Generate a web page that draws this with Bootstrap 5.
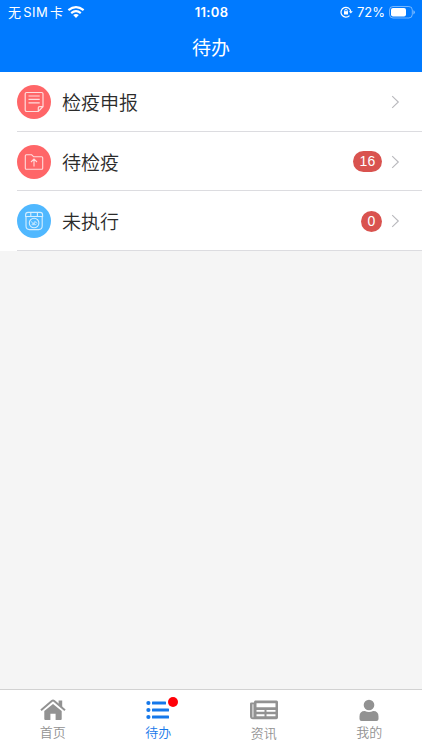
<!DOCTYPE html>
<html lang="zh-CN">
<head>
<meta charset="utf-8">
<meta name="viewport" content="width=device-width, initial-scale=1">
<title>待办</title>
<link href="https://cdn.jsdelivr.net/npm/bootstrap@5.3.0/dist/css/bootstrap.min.css" rel="stylesheet">
<style>
body{font-family:Inter,"Noto Sans CJK SC",sans-serif;background:#f5f5f5;color:#2b2b2b}
svg{display:block;flex:none}
.app-header{height:72px;background:#007aff}
.status-bar{height:24px;display:grid;grid-template-columns:1fr auto 1fr;padding:0 7px 0 8px;font-size:13px;line-height:24px}
.status-bar .clock{font-weight:600;font-size:13px;letter-spacing:.3px}
.carrier{letter-spacing:.4px;word-spacing:-2.2px}
.page-title{font-size:19px;font-weight:400;line-height:48px;height:48px;padding-top:1px}
.task{padding-left:17px;height:59.5px}
.task-line{border-bottom:1px solid #dcdce0;padding:2px 22px 0 0}
.task-icon{width:34px;height:34px;margin-right:11px}
.task-name{font-size:19px;line-height:28px;padding-top:4px;font-weight:350}
.count{background:#d9534f;font:400 14px/20px "Liberation Sans",sans-serif;height:21px;min-width:21px;padding:0 6.5px;margin-right:9px;letter-spacing:.2px}
.tabs{height:61px;border-top:1px solid #d2d2d2;background:#fff}
.tab{color:#929292;font-size:13px;line-height:18px;padding-top:8px;text-decoration:none;font-weight:350}
.tab.current{color:#1678ea}
.tab svg{margin-bottom:1px}
.tab .icon-news{margin-bottom:2px}
.dot{position:absolute;width:10px;height:10px;left:22px;top:-1px;background:#ff0008}
</style>
<script src="https://cdn.jsdelivr.net/npm/bootstrap@5.3.0/dist/js/bootstrap.bundle.min.js"></script>
</head>
<body class="vh-100 d-flex flex-column overflow-hidden">
<header class="app-header text-white">
  <div class="status-bar">
    <div class="d-flex align-items-center"><span class="carrier">无 SIM 卡</span>
      <svg class="ms-1" width="18" height="14" viewBox="0 0 18 14" fill="none" stroke="#fff" stroke-width="2.2"><path d="M1.4 5.2q7.6-6.3 15.2 0M4.2 8.1q4.8-3.9 9.6 0"/><path d="M6.2 10.1q2.8-2.1 5.6 0L9 13z" fill="#fff" stroke="none"/></svg>
    </div>
    <span class="clock">11:08</span>
    <div class="d-flex align-items-center justify-content-end">
      <svg width="13" height="12" viewBox="0 0 13 12" fill="none" stroke="#fff" stroke-width="1.2"><path d="M9.5 9.6A4.9 4.9 0 1 1 10.8 5.6"/><path d="M8.8 5.2h4l-2 2.4z" fill="#fff" stroke="none"/><path d="M4 5.2h4v3.3H4z" fill="#fff" stroke="none"/><path d="M4.8 5.5V4.4a1.2 1.2 0 0 1 2.4 0v1.1" stroke-width=".9"/></svg>
      <span class="ms-1">72%</span>
      <svg class="ms-1" width="26" height="13" viewBox="0 0 26 13"><rect x=".5" y=".5" width="22.8" height="11.5" rx="3.5" fill="none" stroke="#fff" stroke-opacity=".45"/><rect x="2" y="2" width="15" height="8.5" rx="2" fill="#fff"/><path d="M24.4 4.2q1.5.6 1.5 2.1t-1.5 2.1z" fill="#fff" fill-opacity=".5"/></svg>
    </div>
  </div>
  <h1 class="page-title text-center m-0">待办</h1>
</header>
<main class="flex-grow-1">
  <div class="bg-white">
    <div class="task"><div class="task-line d-flex align-items-center h-100">
      <svg class="task-icon" viewBox="0 0 34 34" fill="none" stroke="#ffdcdc" stroke-width="1.2"><circle cx="17" cy="17" r="17" fill="#ff6668" stroke="none"/><path d="M9.6 7.5h15a1.4 1.4 0 0 1 1.4 1.4v12.8L21.3 26.5H9.6a1.4 1.4 0 0 1-1.4-1.4V8.9a1.4 1.4 0 0 1 1.4-1.4zM21.3 26.2v-3.4q0-1.2 1.2-1.2H26M11.5 11h11.2M11.5 14.4h11.2M11.5 17.8h11.2"/></svg>
      <span class="task-name">检疫申报</span>
      <svg class="ms-auto" width="9" height="14" viewBox="0 0 9 14" fill="none" stroke="#b9b9bd" stroke-width="1.1"><path d="M1.2 1.2 7.3 7l-6.1 5.8"/></svg>
    </div></div>
    <div class="task"><div class="task-line d-flex align-items-center h-100">
      <svg class="task-icon" viewBox="0 0 34 34" fill="none" stroke="#ffdcdc" stroke-width="1.1"><circle cx="17" cy="17" r="17" fill="#ff6668" stroke="none"/><path d="M9.3 9.8h5.4l2 2h8q1 0 1 1v10.4q0 1-1 1H9.3q-1 0-1-1V10.8q0-1 1-1zM17 21.5v-7.3M14 17l3-3 3 3"/></svg>
      <span class="task-name">待检疫</span>
      <span class="count badge rounded-pill ms-auto">16</span>
      <svg width="9" height="14" viewBox="0 0 9 14" fill="none" stroke="#b9b9bd" stroke-width="1.1"><path d="M1.2 1.2 7.3 7l-6.1 5.8"/></svg>
    </div></div>
    <div class="task"><div class="task-line d-flex align-items-center h-100">
      <svg class="task-icon" viewBox="0 0 34 34" fill="none" stroke="#d5eeff" stroke-width="1.1"><circle cx="17" cy="17" r="17" fill="#50b8ff" stroke="none"/><path d="M11 8.4h12.2q2.4 0 2.4 2.6v1.5H8.6V11q0-2.6 2.4-2.6zM9 12.5v9.6q0 3.5 3.5 3.5h9.2q3.5 0 3.5-3.5v-9.6M13.8 8.5v4M20.4 8.5v4"/><circle cx="17.1" cy="19" r="4.8"/><path d="M14.4 17.4l1.8 2.8 1.4-2.8M16.8 20.6l1.8-3 1.4 2M14.6 20.7h4.8" stroke-width=".8"/></svg>
      <span class="task-name">未执行</span>
      <span class="count badge rounded-pill ms-auto">0</span>
      <svg width="9" height="14" viewBox="0 0 9 14" fill="none" stroke="#b9b9bd" stroke-width="1.1"><path d="M1.2 1.2 7.3 7l-6.1 5.8"/></svg>
    </div></div>
  </div>
</main>
<nav class="tabs d-flex">
  <a class="tab d-flex flex-column align-items-center w-25" href="#">
    <svg width="26" height="24" viewBox="0 0 26 24" fill="#929292"><path d="M13 5.9 21.7 13v8q0 1-1 1h-5.1v-6.2h-5.2V22H5.3q-1 0-1-1v-8z"/><path d="M1 12.2 11.8 3q1.2-1 2.4 0L25 12.2" fill="none" stroke="#929292" stroke-width="2"/><path d="M18.6 2.5h3.6v7.3l-3.6-3z"/></svg>
    <span>首页</span>
  </a>
  <a class="tab current d-flex flex-column align-items-center w-25" href="#">
    <span class="position-relative"><svg width="24" height="24" viewBox="0 0 24 24" fill="#1678ea"><circle cx="2.4" cy="5" r="2.1"/><circle cx="2.4" cy="12" r="2.1"/><circle cx="2.4" cy="19" r="2.1"/><rect x="6" y="3.5" width="14" height="3" rx=".6"/><rect x="6" y="10.5" width="17" height="3" rx=".6"/><rect x="6" y="17.5" width="17" height="3" rx=".6"/></svg><i class="dot rounded-circle"></i></span>
    <span>待办</span>
  </a>
  <a class="tab d-flex flex-column align-items-center w-25" href="#">
    <svg class="icon-news" width="28" height="24" viewBox="0 0 28 24"><path fill="#929292" fill-rule="evenodd" d="M5.2 2.5h21.3q1.5 0 1.5 1.5v15.5q0 1.7-1.7 1.7H3Q0 21.2 0 18.3V5.7q0-1.3 1.3-1.3H4Q4 2.5 5.2 2.5zM6.5 5.3v4h19v-4zM6.5 12v1.8h8V12zM16.5 12v1.8h9V12zM6.5 16.3v2h8v-2zM16.5 16.3v2h9v-2z"/><path d="M2 6.3h1.8v12q0 1.3-.9 1.3T2 18.3z" fill="#c9c9c9"/></svg>
    <span>资讯</span>
  </a>
  <a class="tab d-flex flex-column align-items-center w-25" href="#">
    <svg width="20" height="24" viewBox="0 0 20 24" fill="#929292"><circle cx="10" cy="7" r="5.3"/><path d="M.5 21v-2.5q0-5.5 5.3-5.5 4.2 2 8.4 0 5.3 0 5.3 5.5V21q0 2-2 2h-15q-2 0-2-2z"/></svg>
    <span>我的</span>
  </a>
</nav>
</body>
</html>
